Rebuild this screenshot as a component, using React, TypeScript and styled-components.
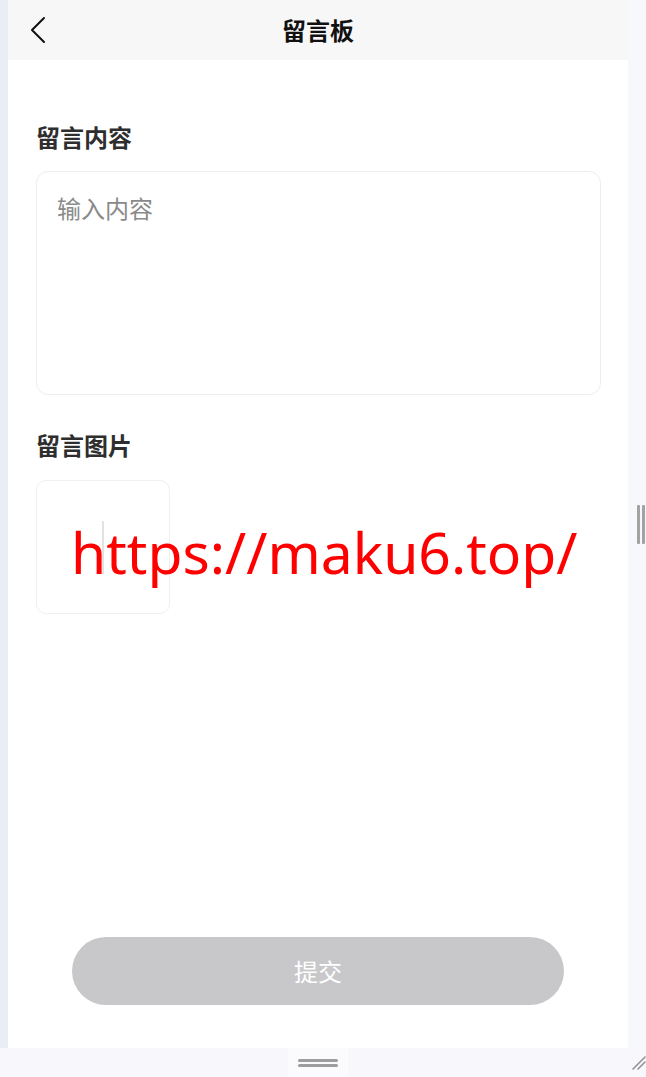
import React from "react";
import styled, { createGlobalStyle } from "styled-components";

const Global = createGlobalStyle`
  html, body { margin: 0; padding: 0; background: #ffffff; }
  body { font-family: "Noto Sans CJK SC", "Noto Sans", sans-serif; }
  * { box-sizing: border-box; }
`;

const Screen = styled.div`
  position: relative;
  width: 646px;
  height: 1077px;
  display: grid;
  grid-template-columns: 8px 620px 18px;
  grid-template-rows: 1048px 29px;
  overflow: hidden;
`;

const LeftStrip = styled.div`
  background: #e9edf5;
`;

const RightStrip = styled.div`
  background: #f7f8fb;
  display: flex;
  align-items: center;
  padding-left: 9px;
  gap: 2px;
`;

const ScrollBar = styled.span`
  width: 3px;
  height: 39px;
  background: #a3a3a6;
  border-radius: 1px;
`;

const Main = styled.main`
  background: #ffffff;
  display: flex;
  flex-direction: column;
`;

const Header = styled.header`
  height: 60px;
  background: #f7f7f7;
  display: grid;
  grid-template-columns: 1fr auto 1fr;
  align-items: center;
  padding: 0 22px;
`;

const BackButton = styled.button`
  justify-self: start;
  display: flex;
  align-items: center;
  background: none;
  border: none;
  padding: 0;
  cursor: pointer;
`;

const Title = styled.h1`
  margin: 0;
  font-size: 24px;
  line-height: 24px;
  font-weight: 700;
  color: #111111;
`;

const Body = styled.div`
  flex: 1;
  display: flex;
  flex-direction: column;
  padding: 65px 28px 0;
`;

const Label = styled.div<{ $first?: boolean }>`
  font-size: 24px;
  line-height: 24px;
  font-weight: 700;
  color: #2e2e2e;
  margin-top: ${(p) => (p.$first ? "0" : "38px")};
  margin-bottom: ${(p) => (p.$first ? "22px" : "23px")};
`;

const TextArea = styled.textarea`
  width: 565px;
  height: 224px;
  border: 1px solid #ededed;
  border-radius: 12px;
  padding: 24px 20px;
  resize: none;
  outline: none;
  font-family: "Noto Sans CJK SC", sans-serif;
  font-size: 24px;
  line-height: 24px;
  color: #333;
  background: #fff;
  &::placeholder { color: #8a8a8a; }
`;

const Upload = styled.div`
  width: 134px;
  height: 134px;
  border: 1px solid #efefef;
  border-radius: 10px;
  display: flex;
  align-items: center;
  justify-content: center;
`;

const UploadMark = styled.span`
  width: 2px;
  height: 53px;
  background: #e2e2e2;
`;

const SubmitButton = styled.button`
  margin: auto 36px 43px;
  height: 68px;
  border: none;
  border-radius: 34px;
  background: #c8c8ca;
  color: #ffffff;
  font-family: "Noto Sans CJK SC", sans-serif;
  font-size: 24px;
  line-height: 24px;
  cursor: pointer;
`;

const BottomBar = styled.div`
  grid-column: 1 / -1;
  background: #f8f8fc;
  display: grid;
  grid-template-columns: 8px 620px 18px;
`;

const HandleArea = styled.div`
  display: flex;
  justify-content: center;
`;

const Handle = styled.div`
  width: 60px;
  background: #fbfbfd;
  display: flex;
  flex-direction: column;
  align-items: center;
  padding-top: 11px;
  gap: 2px;
`;

const HandleLine = styled.span`
  width: 40px;
  height: 3px;
  border-radius: 2px;
  background: #9d9d9f;
`;

const GripArea = styled.div`
  display: flex;
  align-items: flex-start;
  justify-content: flex-end;
  padding-top: 8px;
`;

const Watermark = styled.div`
  position: absolute;
  left: 71px;
  top: 524px;
  font-family: "Noto Sans", sans-serif;
  font-size: 57px;
  line-height: 57px;
  color: #ff0000;
  white-space: nowrap;
  pointer-events: none;
`;

export default function App() {
  return (
    <>
      <Global />
      <Screen>
        <LeftStrip />
        <Main>
          <Header>
            <BackButton aria-label="返回">
              <svg width="16" height="28" viewBox="0 0 16 28" fill="none">
                <path d="M14 2 L2 14 L14 26" stroke="#111" strokeWidth="2" strokeLinecap="round" strokeLinejoin="round" />
              </svg>
            </BackButton>
            <Title>留言板</Title>
            <span />
          </Header>
          <Body>
            <Label $first>留言内容</Label>
            <TextArea placeholder="输入内容" />
            <Label>留言图片</Label>
            <Upload>
              <UploadMark />
            </Upload>
            <SubmitButton>提交</SubmitButton>
          </Body>
        </Main>
        <RightStrip>
          <ScrollBar />
          <ScrollBar />
        </RightStrip>
        <BottomBar>
          <span />
          <HandleArea>
            <Handle>
              <HandleLine />
              <HandleLine />
            </Handle>
          </HandleArea>
          <GripArea>
            <svg width="14" height="14" viewBox="0 0 14 14">
              <path d="M1 13 L13 1 M6 13 L13 6" stroke="#8f8f92" strokeWidth="1.5" strokeLinecap="round" />
            </svg>
          </GripArea>
        </BottomBar>
        <Watermark>https://maku6.top/</Watermark>
      </Screen>
    </>
  );
}
